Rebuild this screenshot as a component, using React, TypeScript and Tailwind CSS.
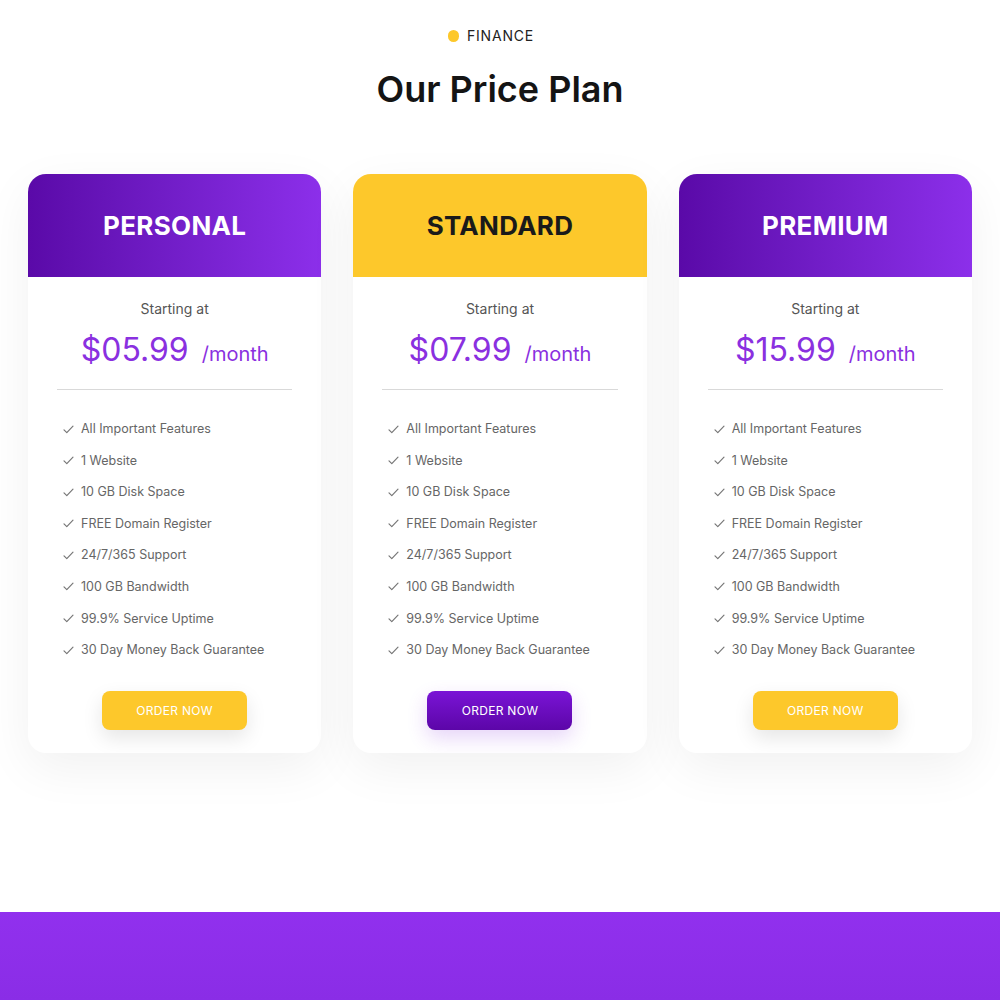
import React from "react";

const features = [
  "All Important Features",
  "1 Website",
  "10 GB Disk Space",
  "FREE Domain Register",
  "24/7/365 Support",
  "100 GB Bandwidth",
  "99.9% Service Uptime",
  "30 Day Money Back Guarantee",
];

type Plan = { name: string; price: string; featured: boolean };
const plans: Plan[] = [
  { name: "PERSONAL", price: "$05.99", featured: false },
  { name: "STANDARD", price: "$07.99", featured: true },
  { name: "PREMIUM", price: "$15.99", featured: false },
];

function Check() {
  return (
    <svg width="11" height="9" viewBox="0 0 11 9" fill="none" className="shrink-0">
      <path d="M1 4.8 L3.8 7.6 L10 1.2" stroke="#777" strokeWidth="1.2" strokeLinecap="round" strokeLinejoin="round" />
    </svg>
  );
}

function Card({ plan }: { plan: Plan }) {
  return (
    <div className="flex flex-col rounded-[18px] bg-white shadow-[0_15px_50px_rgba(0,0,0,0.06)] overflow-hidden h-[579px]">
      {plan.featured ? (
        <div className="h-[103px] flex items-center justify-center bg-[#fdc82b]">
          <span className="text-[26px] font-bold tracking-[0.3px] text-[#1a1a1a]">{plan.name}</span>
        </div>
      ) : (
        <div className="h-[103px] flex items-center justify-center bg-gradient-to-r from-[#5a09a8] to-[#8c2fea]">
          <span className="text-[26px] font-bold tracking-[0.3px] text-white">{plan.name}</span>
        </div>
      )}
      <div className="flex flex-col items-center px-[29px]">
        <div className="mt-[23px] text-[14px] leading-[18px] text-[#555]">Starting at</div>
        <div className="mt-[10px] flex items-baseline gap-[13px] text-[#8a30e0]">
          <span className="text-[32px] leading-[44px]">{plan.price}</span>
          <span className="text-[20px]">/month</span>
        </div>
        <div className="mt-[17px] h-px w-full bg-[#d9d9d9]" />
        <ul className="mt-[30px] w-full flex flex-col gap-[13.6px] pl-[6px]">
          {features.map((f) => (
            <li key={f} className="flex items-center gap-[7px] text-[12.5px] leading-[18px] text-[#666]">
              <Check />
              <span>{f}</span>
            </li>
          ))}
        </ul>
        {plan.featured ? (
          <button className="mt-[32px] w-[145px] h-[39px] rounded-[8px] bg-gradient-to-b from-[#7a14d6] to-[#5c06a8] text-white text-[12px] tracking-[0.3px] shadow-[0_8px_20px_rgba(130,40,220,0.2)]">
            ORDER NOW
          </button>
        ) : (
          <button className="mt-[32px] w-[145px] h-[39px] rounded-[8px] bg-[#fdc82b] text-white text-[12px] tracking-[0.3px] shadow-[0_8px_20px_rgba(0,0,0,0.1)]">
            ORDER NOW
          </button>
        )}
      </div>
    </div>
  );
}

export default function App() {
  return (
    <div className="w-[1000px] h-[1000px] bg-white flex flex-col overflow-hidden" style={{ fontFamily: "Inter, 'Open Sans', sans-serif" }}>
      <div className="pt-[25px] flex items-center justify-center gap-[8px] pr-[18px]">
        <span className="w-[11px] h-[12px] rounded-full bg-[#fdc82b]" />
        <span className="text-[14px] tracking-[0.8px] text-[#222]">FINANCE</span>
      </div>
      <h1 className="mt-[21px] text-center text-[36px] leading-[44px] font-semibold text-[#141414]">Our Price Plan</h1>
      <div className="mt-[63px] px-[28px] grid grid-cols-3 gap-[32px]">
        {plans.map((p) => (
          <Card key={p.name} plan={p} />
        ))}
      </div>
      <div className="mt-auto h-[88px] bg-gradient-to-b from-[#9130ee] to-[#8a2de6]" />
    </div>
  );
}
